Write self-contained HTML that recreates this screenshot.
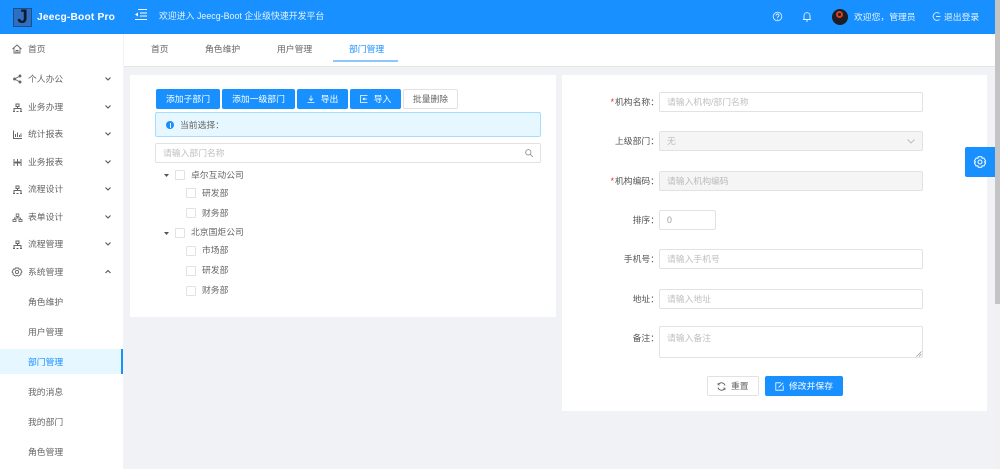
<!DOCTYPE html>
<html><head><meta charset="utf-8"><style>
*{box-sizing:border-box}
html,body{margin:0;padding:0;width:1000px;height:469px;overflow:hidden;background:#f0f2f5}
body{font-family:"Liberation Sans","Noto Sans CJK SC",sans-serif;font-size:8.8px;color:#666}
#w{position:absolute;left:0;top:0;width:1000px;height:469px;overflow:hidden;filter:blur(.35px)}
.a{position:absolute;white-space:nowrap}
.t{position:absolute;white-space:nowrap;line-height:12px;height:12px}
.btn{position:absolute;top:89px;height:20px;background:#1890ff;color:#fff;border-radius:2px;text-align:center;line-height:20px;font-size:8.8px}
.cb{position:absolute;width:10px;height:10px;border:1px solid #e2e2e2;background:#fff;border-radius:1px}
.inp{position:absolute;left:659px;width:264px;height:20px;border:1px solid #e2e2e2;border-radius:2px;background:#fff;color:#bfbfbf;line-height:18px;padding-left:7px;font-size:8.8px}
.dis{background:#f5f5f5;color:#bbb}
.lb{position:absolute;right:341px;line-height:12px;white-space:nowrap;color:#555;font-size:8.8px}
.lb i{color:#f5222d;font-style:normal;margin-right:1px}
svg{position:absolute;overflow:visible;fill:none}
</style></head><body><div id="w">

<!-- header -->
<div class="a" style="left:0;top:0;width:995px;height:34px;background:#1890ff"></div>
<div class="a" style="left:13px;top:8px;width:19px;height:19px;background:#2f6fc0;border:1px solid #1d4f8f"></div>
<div class="a" style="left:13px;top:7px;width:19px;text-align:center;font:bold 19px/22px 'Liberation Sans',sans-serif;color:#0c1a2c">J</div>
<div class="a" style="left:37px;top:10px;font-weight:bold;font-size:10.2px;line-height:15px;color:#fff;letter-spacing:.2px">Jeecg-Boot Pro</div>
<svg style="left:135px;top:9px" width="12" height="11" stroke="#fff" stroke-width="1"><path d="M3 .5H12M5 4H12M5 7H12M0 10.500H12"/><path d="M3 3.500L0 5.500L3 7.500Z" fill="#fff" stroke="none"/></svg>
<div class="a" style="left:159px;top:10px;font-size:8.9px;line-height:13px;color:#e8f4ff">欢迎进入 Jeecg-Boot 企业级快速开发平台</div>

<svg style="left:772px;top:11px" width="11" height="11" stroke="#d6ebff" stroke-width=".9"><circle cx="5.500" cy="5.500" r="4.300"/><path d="M4 4.500C4 2.500 7 2.500 7 4.500C7 5.500 5.500 5.500 5.500 7M5.500 8V8.800"/></svg>
<svg style="left:802px;top:11px" width="10" height="11" stroke="#e8f4ff" stroke-width=".9"><path d="M1 8.500H9M2 8.500V4.500C2 .8 8 .8 8 4.500V8.500M4 10H6"/></svg>
<div class="a" style="left:832px;top:9px;width:16px;height:16px;border-radius:50%;background:#1d1d25"></div>
<div class="a" style="left:836px;top:11px;width:7px;height:7px;border-radius:50%;border:2px solid #d8431f"></div>
<div class="a" style="left:854px;top:11px;font-size:8.8px;line-height:12px;color:#e8f4ff">欢迎您，管理员</div>
<svg style="left:932px;top:12px" width="9" height="9" stroke="#d6ebff" stroke-width=".9"><path d="M7.500 1.500A3.900 3.900 0 1 0 7.500 7.500M4 4.500H8.500"/></svg>
<div class="a" style="left:944px;top:11px;font-size:8.8px;line-height:12px;color:#e8f4ff">退出登录</div>

<!-- sidebar -->
<div class="a" style="left:0;top:34px;width:123px;height:435px;background:#fff"></div>
<div class="t" style="left:28px;top:43px">首页</div>
<div class="t" style="left:28px;top:73px">个人办公</div>
<div class="t" style="left:28px;top:101px">业务办理</div>
<div class="t" style="left:28px;top:128px">统计报表</div>
<div class="t" style="left:28px;top:156px">业务报表</div>
<div class="t" style="left:28px;top:183px">流程设计</div>
<div class="t" style="left:28px;top:211px">表单设计</div>
<div class="t" style="left:28px;top:238px">流程管理</div>
<div class="t" style="left:28px;top:266px">系统管理</div>
<div class="t" style="left:28px;top:296px">角色维护</div>
<div class="t" style="left:28px;top:326px">用户管理</div>
<div class="a" style="left:0;top:349px;width:123px;height:25px;background:#e6f7ff"></div>
<div class="a" style="left:121px;top:349px;width:2px;height:25px;background:#1890ff"></div>
<div class="t" style="left:28px;top:356px;color:#1890ff">部门管理</div>
<div class="t" style="left:28px;top:386px">我的消息</div>
<div class="t" style="left:28px;top:416px">我的部门</div>
<div class="t" style="left:28px;top:446px">角色管理</div>

<!-- sidebar icons -->
<svg style="left:12px;top:44px" width="10" height="10" stroke="#666" stroke-width=".9"><path d="M.5 5L5 1L9.500 5M2 4V9H8V4M4 9V6.500H6V9"/></svg>
<svg style="left:13px;top:75px" width="8" height="8" stroke="#666" stroke-width=".9"><path d="M7 1L1.500 4L7 7"/><circle cx="1.500" cy="4" r="1" fill="#666"/><circle cx="7" cy="1" r="1" fill="#666"/><circle cx="7" cy="7" r="1" fill="#666"/></svg>
<svg style="left:13px;top:103px" width="9" height="9" stroke="#666" stroke-width="1"><path d="M3 1H6V3.500H3ZM4.500 3.500V5.500M1 8.500V5.500H8V8.500M0 8.500H2M3.500 8.500H5.500M7 8.500H9"/></svg>
<svg style="left:13px;top:130px" width="9" height="9" stroke="#666" stroke-width="1"><path d="M.5 .5V8.500H9M2.500 7V4M4.500 7V2.500M6.500 7V5M8 7V3.500"/></svg>
<svg style="left:13px;top:158px" width="9" height="9" stroke="#666" stroke-width="1"><path d="M1 1V8M3 3V6M4.500 1V8M6 3V6M8 1V8M1 4.500H8"/></svg>
<svg style="left:13px;top:185px" width="9" height="9" stroke="#666" stroke-width="1"><path d="M3 1H6V3.500H3ZM4.500 3.500V5.500M1 8.500V5.500H8V8.500M0 8.500H2M3.500 8.500H5.500M7 8.500H9"/></svg>
<svg style="left:13px;top:213px" width="9" height="9" stroke="#777" stroke-width=".9"><path d="M3.200 1H5.800V3.500H3.200ZM4.500 3.500V5M1.500 6V5H7.500V6M0 6.500H3V8.500H0ZM6 6.500H9V8.500H6Z"/></svg>
<svg style="left:13px;top:240px" width="9" height="9" stroke="#666" stroke-width="1"><path d="M3 1H6V3.500H3ZM4.500 3.500V5.500M1 8.500V5.500H8V8.500M0 8.500H2M3.500 8.500H5.500M7 8.500H9"/></svg>
<svg style="left:12px;top:267px" width="10" height="10" stroke="#666" stroke-width=".9"><path d="M3.500 1H6.500L7 2.200L8.500 2L10 5L8.800 6.200L9 7.500L6.500 9L5 8.500L3.500 9L1 7.500L1.200 6.200L0 5L1.500 2L3 2.200Z"/><circle cx="5" cy="5" r="1.600"/></svg>
<!-- chevrons -->
<svg style="left:105px;top:77px" width="6" height="4" stroke="#555" stroke-width="1.100"><path d="M.5 .5L3 3L5.500 .5"/></svg>
<svg style="left:105px;top:105px" width="6" height="4" stroke="#555" stroke-width="1.100"><path d="M.5 .5L3 3L5.500 .5"/></svg>
<svg style="left:105px;top:132px" width="6" height="4" stroke="#555" stroke-width="1.100"><path d="M.5 .5L3 3L5.500 .5"/></svg>
<svg style="left:105px;top:160px" width="6" height="4" stroke="#555" stroke-width="1.100"><path d="M.5 .5L3 3L5.500 .5"/></svg>
<svg style="left:105px;top:187px" width="6" height="4" stroke="#555" stroke-width="1.100"><path d="M.5 .5L3 3L5.500 .5"/></svg>
<svg style="left:105px;top:215px" width="6" height="4" stroke="#555" stroke-width="1.100"><path d="M.5 .5L3 3L5.500 .5"/></svg>
<svg style="left:105px;top:242px" width="6" height="4" stroke="#555" stroke-width="1.100"><path d="M.5 .5L3 3L5.500 .5"/></svg>
<svg style="left:105px;top:270px" width="6" height="4" stroke="#555" stroke-width="1.100"><path d="M.5 3L3 .5L5.500 3"/></svg>

<!-- tabs -->
<div class="a" style="left:124px;top:34px;width:871px;height:33px;background:#fff;border-bottom:1px solid #e4e4e4"></div>
<div class="t" style="left:151px;top:43px">首页</div>
<div class="t" style="left:205px;top:43px">角色维护</div>
<div class="t" style="left:277px;top:43px">用户管理</div>
<div class="t" style="left:349px;top:43px;color:#1890ff">部门管理</div>
<div class="a" style="left:333px;top:60px;width:65px;height:2px;background:#8cc8ff"></div>

<!-- left panel -->
<div class="a" style="left:130px;top:75px;width:426px;height:242px;background:#fff"></div>
<div class="btn" style="left:156px;width:64px">添加子部门</div>
<div class="btn" style="left:222px;width:73px">添加一级部门</div>
<div class="btn" style="left:297px;width:51px;padding-left:14px">导出</div>
<svg style="left:307px;top:95px" width="8" height="8" stroke="#fff" stroke-width=".8"><path d="M4 .5V5.500M2 3.500L4 5.500L6 3.500M.5 7.500H7.500"/></svg>
<div class="btn" style="left:350px;width:51px;padding-left:14px">导入</div>
<svg style="left:360px;top:95px" width="8" height="8" stroke="#fff" stroke-width=".8"><path d="M7.500 .5H.5V7.500H7.500M3 4H7M4.500 2.800L3 4L4.500 5.200"/></svg>
<div class="btn" style="left:403px;width:55px;background:#fff;border:1px solid #e2e2e2;color:#666;line-height:18px">批量删除</div>

<div class="a" style="left:155px;top:112px;width:386px;height:25px;background:#e6f7ff;border:1px solid #a8dcff;border-radius:2px"></div>
<div class="a" style="left:166px;top:121px;width:8px;height:8px;border-radius:50%;background:#1890ff"></div>
<div class="a" style="left:169.500px;top:122.500px;width:1px;height:5px;background:#fff"></div>
<div class="t" style="left:180px;top:119px">当前选择：</div>

<div class="a" style="left:155px;top:143px;width:386px;height:20px;background:#fff;border:1px solid #e2e2e2;border-radius:2px;color:#bfbfbf;line-height:18px;padding-left:7px">请输入部门名称</div>
<svg style="left:525px;top:149px" width="8" height="8" stroke="#999" stroke-width=".9"><circle cx="3.300" cy="3.300" r="2.700"/><path d="M5.300 5.300L7.800 7.800"/></svg>

<!-- tree -->
<svg style="left:164px;top:174px" width="5" height="3"><path d="M0 0H5L2.500 3Z" fill="#555"/></svg>
<div class="cb" style="left:175px;top:170px"></div><div class="t" style="left:191px;top:169px">卓尔互动公司</div>
<div class="cb" style="left:186px;top:188px"></div><div class="t" style="left:202px;top:187px">研发部</div>
<div class="cb" style="left:186px;top:208px"></div><div class="t" style="left:202px;top:207px">财务部</div>
<svg style="left:164px;top:232px" width="5" height="3"><path d="M0 0H5L2.500 3Z" fill="#555"/></svg>
<div class="cb" style="left:175px;top:228px"></div><div class="t" style="left:191px;top:226px">北京国炬公司</div>
<div class="cb" style="left:186px;top:246px"></div><div class="t" style="left:202px;top:244px">市场部</div>
<div class="cb" style="left:186px;top:266px"></div><div class="t" style="left:202px;top:264px">研发部</div>
<div class="cb" style="left:186px;top:286px"></div><div class="t" style="left:202px;top:284px">财务部</div>

<!-- right panel -->
<div class="a" style="left:562px;top:75px;width:425px;height:336px;background:#fff"></div>
<div class="lb" style="top:96px"><i>*</i>机构名称：</div>
<div class="inp" style="top:92px">请输入机构/部门名称</div>
<div class="lb" style="top:135px">上级部门：</div>
<div class="inp dis" style="top:131px">无</div>
<svg style="left:907px;top:139px" width="8" height="5" stroke="#bbb" stroke-width=".9"><path d="M.5 .5L4 4L7.500 .5"/></svg>
<div class="lb" style="top:175px"><i>*</i>机构编码：</div>
<div class="inp dis" style="top:171px">请输入机构编码</div>
<div class="lb" style="top:214px">排序：</div>
<div class="inp" style="top:210px;width:57px;color:#999">0</div>
<div class="lb" style="top:253px">手机号：</div>
<div class="inp" style="top:249px">请输入手机号</div>
<div class="lb" style="top:293px">地址：</div>
<div class="inp" style="top:289px">请输入地址</div>
<div class="lb" style="top:332px">备注：</div>
<div class="inp" style="top:326px;height:32px;line-height:22px">请输入备注</div>
<svg style="left:916px;top:351px" width="6" height="6" stroke="#888" stroke-width=".6"><path d="M.5 5.500L5.500 .5M3 5.500L5.500 3"/></svg>

<div class="a" style="left:707px;top:376px;width:52px;height:20px;background:#fff;border:1px solid #e2e2e2;border-radius:2px;line-height:18px;padding-left:23px;color:#666">重置</div>
<svg style="left:717px;top:382px" width="9" height="9" stroke="#555" stroke-width=".9"><path d="M8 3.500A3.800 3.800 0 0 0 1.200 2.500M1 5.500A3.800 3.800 0 0 0 7.800 6.500"/><path d="M1 1V3H3M8 8V6H6" stroke-width=".6"/></svg>
<div class="a" style="left:765px;top:376px;width:78px;height:20px;background:#1890ff;border-radius:2px;line-height:20px;padding-left:24px;color:#fff;font-size:8.8px">修改并保存</div>
<svg style="left:775px;top:382px" width="9" height="9" stroke="#fff" stroke-width=".8"><path d="M6 .8H.8V8.200H8.200V3.500M3.500 5.500L8.200 .8"/></svg>

<!-- settings + scrollbar -->
<div class="a" style="left:995px;top:0;width:5px;height:469px;background:#f1f1f1"></div>
<div class="a" style="left:995px;top:0;width:5px;height:304px;background:#c4c4c4"></div>
<div class="a" style="left:965px;top:147px;width:30px;height:30px;background:#1890ff;border-radius:2px 0 0 2px"></div>
<svg style="left:974px;top:156px" width="12" height="12" stroke="#fff" stroke-width="1"><path d="M4.300 .8H7.700L8.200 2.300L9.900 2L11.600 5L10.500 6L11.600 7L9.900 10L8.200 9.700L7.700 11.200H4.300L3.800 9.700L2.100 10L.4 7L1.500 6L.4 5L2.100 2L3.800 2.300Z"/><circle cx="6" cy="6" r="2"/></svg>
</div></body></html>
